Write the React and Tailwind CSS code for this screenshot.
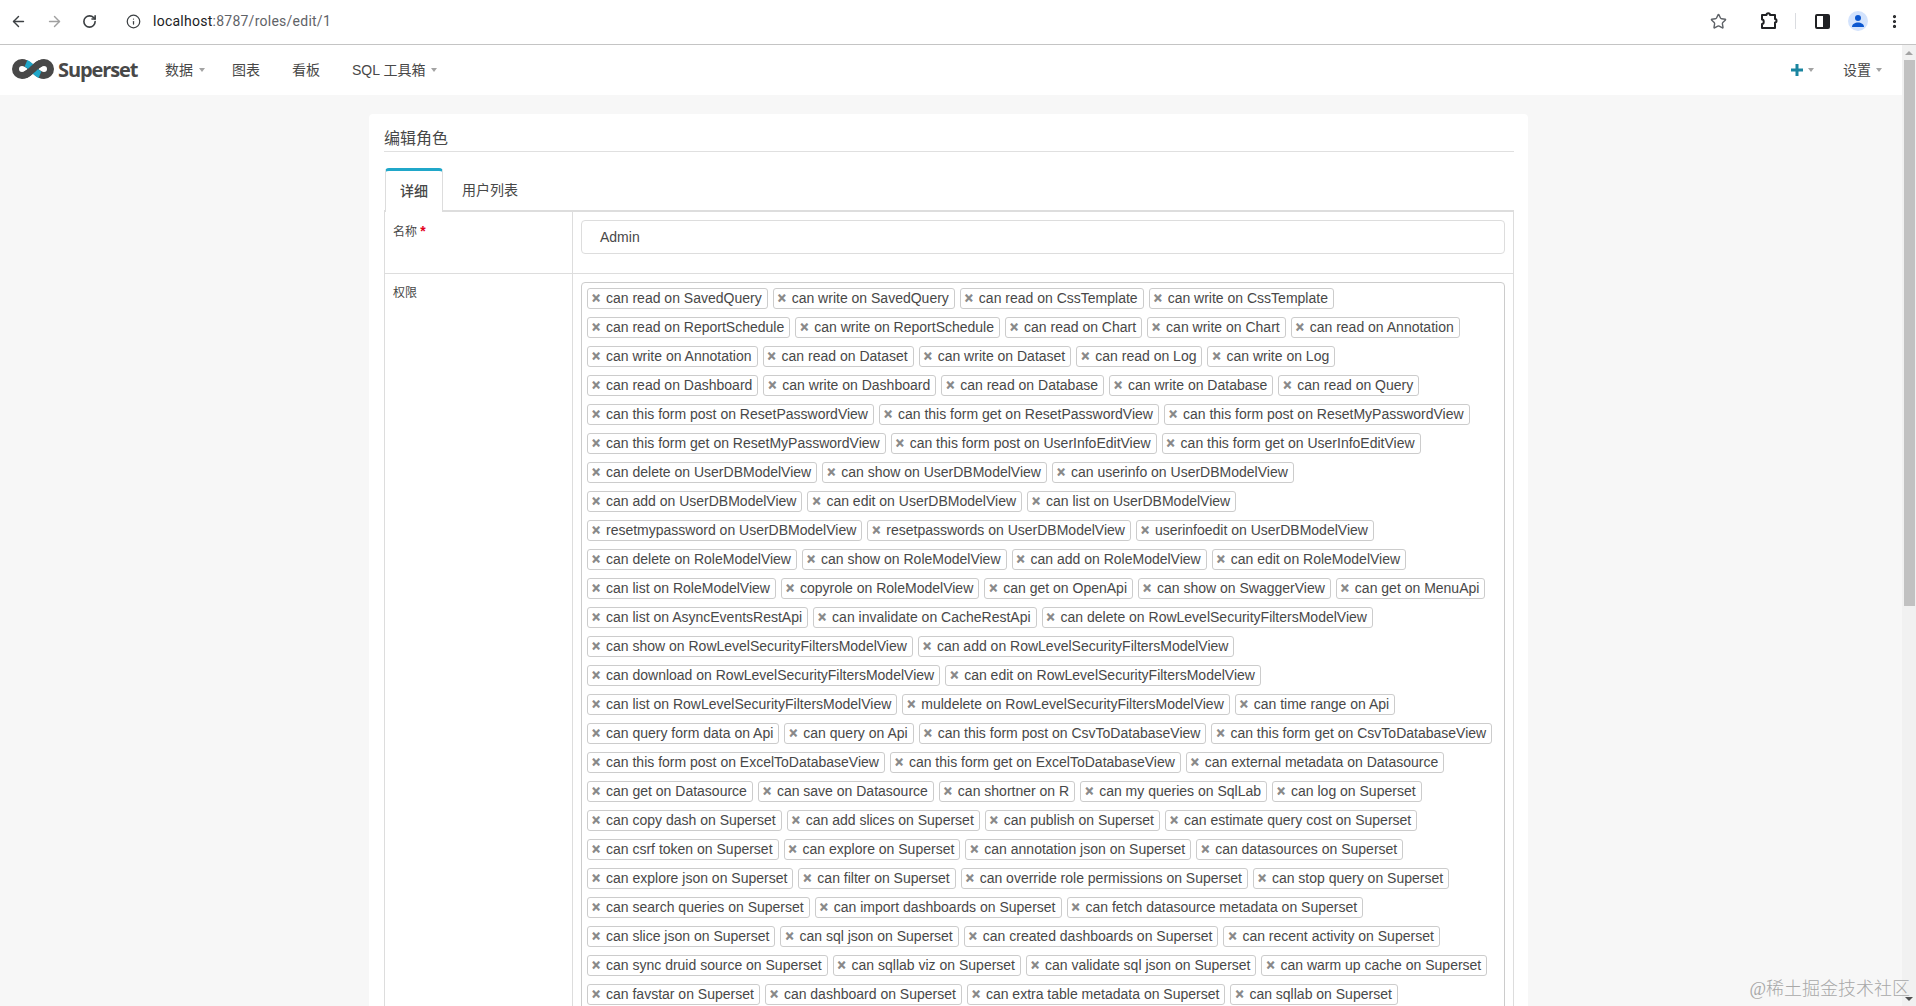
import React from 'react';
import { ArrowLeft, ArrowRight, RotateCw, Info, Star, EllipsisVertical } from 'lucide-react';

const permissions = [
  'can read on SavedQuery', 'can write on SavedQuery', 'can read on CssTemplate', 'can write on CssTemplate',
  'can read on ReportSchedule', 'can write on ReportSchedule', 'can read on Chart', 'can write on Chart', 'can read on Annotation',
  'can write on Annotation', 'can read on Dataset', 'can write on Dataset', 'can read on Log', 'can write on Log',
  'can read on Dashboard', 'can write on Dashboard', 'can read on Database', 'can write on Database', 'can read on Query',
  'can this form post on ResetPasswordView', 'can this form get on ResetPasswordView', 'can this form post on ResetMyPasswordView',
  'can this form get on ResetMyPasswordView', 'can this form post on UserInfoEditView', 'can this form get on UserInfoEditView',
  'can delete on UserDBModelView', 'can show on UserDBModelView', 'can userinfo on UserDBModelView',
  'can add on UserDBModelView', 'can edit on UserDBModelView', 'can list on UserDBModelView',
  'resetmypassword on UserDBModelView', 'resetpasswords on UserDBModelView', 'userinfoedit on UserDBModelView',
  'can delete on RoleModelView', 'can show on RoleModelView', 'can add on RoleModelView', 'can edit on RoleModelView',
  'can list on RoleModelView', 'copyrole on RoleModelView', 'can get on OpenApi', 'can show on SwaggerView', 'can get on MenuApi',
  'can list on AsyncEventsRestApi', 'can invalidate on CacheRestApi', 'can delete on RowLevelSecurityFiltersModelView',
  'can show on RowLevelSecurityFiltersModelView', 'can add on RowLevelSecurityFiltersModelView',
  'can download on RowLevelSecurityFiltersModelView', 'can edit on RowLevelSecurityFiltersModelView',
  'can list on RowLevelSecurityFiltersModelView', 'muldelete on RowLevelSecurityFiltersModelView', 'can time range on Api',
  'can query form data on Api', 'can query on Api', 'can this form post on CsvToDatabaseView', 'can this form get on CsvToDatabaseView',
  'can this form post on ExcelToDatabaseView', 'can this form get on ExcelToDatabaseView', 'can external metadata on Datasource',
  'can get on Datasource', 'can save on Datasource', 'can shortner on R', 'can my queries on SqlLab', 'can log on Superset',
  'can copy dash on Superset', 'can add slices on Superset', 'can publish on Superset', 'can estimate query cost on Superset',
  'can csrf token on Superset', 'can explore on Superset', 'can annotation json on Superset', 'can datasources on Superset',
  'can explore json on Superset', 'can filter on Superset', 'can override role permissions on Superset', 'can stop query on Superset',
  'can search queries on Superset', 'can import dashboards on Superset', 'can fetch datasource metadata on Superset',
  'can slice json on Superset', 'can sql json on Superset', 'can created dashboards on Superset', 'can recent activity on Superset',
  'can sync druid source on Superset', 'can sqllab viz on Superset', 'can validate sql json on Superset', 'can warm up cache on Superset',
  'can favstar on Superset', 'can dashboard on Superset', 'can extra table metadata on Superset', 'can sqllab on Superset',
];

const Caret = ({ className = 'ml-[6px]' }) => (
  <span className={`${className} inline-block w-0 h-0 border-x-[3px] border-x-transparent border-t-[4px] border-t-[#a3a3a3]`} />
);

const SupersetLogo = () => (
  <svg className="block" width="42" height="20" viewBox="0 0 42 20" fill="none" strokeWidth="7">
    <path d="M10 3.500a6.500 6.500 0 1 0 0 13c4.500 0 7-3 11-6.500s6.500-6.500 11-6.500a6.500 6.500 0 1 1 0 13c-4.500 0-7-3-11-6.500S14.500 3.500 10 3.500Z" stroke="#484848" />
    {/* teal on the falling strand, dark strand crosses over it */}
    <path d="M14 4.200C17 5.500 18.500 7.800 21 10c2.500 2.200 4 4.500 7 5.800" stroke="#20a7c9" />
    <path d="M13.500 15.800C16.500 14.500 18.500 12.200 21 10s4.500-4.500 7.500-5.800" stroke="#484848" />
  </svg>
);

const Tag = ({ label }) => (
  <span className="flex items-center h-[21px] pl-[4px] pr-[5px] border border-[#ccc] rounded-[3px] bg-white text-[14px] leading-[19px] text-[#484848] whitespace-nowrap">
    <span className="w-[13px] font-bold text-[#878787] [-webkit-text-stroke:0.5px_#878787]">×</span>
    <span className="ml-[1px]">{label}</span>
  </span>
);

const BrowserBar = () => (
  <div className="h-[45px] shrink-0 flex items-center pb-[2px] bg-white border-b border-[#c4c4c4] text-[#3c4043]">
    <ArrowLeft className="ml-[10px] w-[17px] h-[17px]" strokeWidth={2} />
    <ArrowRight className="ml-[19px] w-[17px] h-[17px] text-[#a0a0a0]" strokeWidth={2} />
    <RotateCw className="ml-[19px] w-[15px] h-[15px]" strokeWidth={2.6} />
    <Info className="ml-[29px] w-[15px] h-[15px]" strokeWidth={2} />
    <div className="ml-[12px] text-[14px] font-['Roboto',sans-serif] tracking-[0.25px]">
      <span className="text-[#202124]">localhost</span>
      <span className="text-[#5f6368]">:8787/roles/edit/1</span>
    </div>
    <Star className="ml-auto w-[17px] h-[17px] text-[#5f6368]" strokeWidth={2} />
    {/* extension puzzle */}
    <svg className="ml-[33px]" width="18" height="18" viewBox="0 0 18 18" fill="none" stroke="#202124" strokeWidth="2" strokeLinejoin="round">
      <path d="M2 3h4.500c0-2.300 3.500-2.300 3.500 0H15v4c2 0 2 3.500 0 3.500V16H2v-4c2.300 0 2.300-4.500 0-4.500Z" />
    </svg>
    <div className="ml-[17px] w-[1px] h-[16px] bg-[#dadce0]" />
    {/* side panel */}
    <div className="ml-[19px] w-[15px] h-[15px] flex border-2 border-[#202124] rounded-[2px]">
      <div className="w-1/2 bg-white" />
      <div className="w-1/2 bg-[#202124]" />
    </div>
    <div className="ml-[18px] w-[20px] h-[20px] rounded-full bg-[#d3e3fd] flex items-center justify-center">
      <svg width="14" height="14" viewBox="0 0 14 14" fill="#0b57d0">
        <circle cx="7" cy="4" r="3" />
        <path d="M1 13c0-3 3-4.500 6-4.500s6 1.500 6 4.500Z" />
      </svg>
    </div>
    <EllipsisVertical className="ml-[18px] mr-[13px] w-[17px] h-[17px] text-[#202124]" strokeWidth={2.5} />
  </div>
);

const NavBar = () => (
  <div className="h-[50px] shrink-0 flex items-center bg-white text-[14px] text-[#484848]">
    <div className="ml-[12px] mb-[2px]"><SupersetLogo /></div>
    <span className="ml-[4px] w-[80px] text-[20px] font-bold text-[#484848] font-['Open_Sans',sans-serif] tracking-[-1.1px]">Superset</span>
    <span className="ml-[27px]">数据</span>
    <Caret />
    <span className="ml-[27px]">图表</span>
    <span className="ml-[32px]">看板</span>
    <span className="ml-[32px]">SQL 工具箱</span>
    <Caret />
    <span className="ml-auto">
      <svg width="12" height="12" viewBox="0 0 12 12" fill="#1a85a0"><path d="M4.500 0h3v4.500H12v3H7.500V12h-3V7.500H0v-3h4.500Z" /></svg>
    </span>
    <Caret className="ml-[5px]" />
    <span className="ml-[29px]">设置</span>
    <Caret className="ml-[5px]" />
    <div className="w-[20px]" />
  </div>
);

const Scrollbar = () => (
  <div className="w-[14px] shrink-0 flex flex-col items-center bg-[#f1f1f1]">
    <div className="mt-[6px] w-0 h-0 border-x-[4px] border-x-transparent border-b-[4px] border-b-[#a3a3a3]" />
    <div className="mt-[5px] w-[11px] h-[546px] bg-[#c1c1c1]" />
    <div className="mt-auto mb-[5px] w-0 h-0 border-x-[4px] border-x-transparent border-t-[4px] border-t-[#505050]" />
  </div>
);

const RoleForm = () => (
  <div className="mt-[19px] ml-[369px] w-[1159px] pl-[15px] pr-[14px] pt-[15px] bg-white rounded-[4px]">
    <div className="h-[22px] border-b border-[#e0e0e0] text-[16px] leading-[20px] text-[#484848] box-content">编辑角色</div>
    <div className="mt-[16px] flex h-[44px] border-b-2 border-[#ddd] text-[14px] text-[#484848]">
      <div className="w-[58px] h-[44px] ml-[1px] border-x border-[#ddd] border-t-[3px] border-t-[#20a7c9] rounded-t-[4px] bg-white text-center leading-[40px] font-medium">详细</div>
      <div className="ml-[19px] leading-[44px]">用户列表</div>
    </div>
    <div className="border-x border-[#ddd] text-[12px] text-[#484848]">
      <div className="flex h-[62px] border-b border-[#ddd]">
        <div className="w-[188px] shrink-0 pl-[8px] pt-[11px] border-r border-[#ddd]">
          名称 <span className="text-[14px] leading-none text-[#e3001b] font-bold">*</span>
        </div>
        <div className="flex-1 pl-[8px] pr-[8px] pt-[8px]">
          <div className="h-[34px] border border-[#ddd] rounded-[4px] pl-[18px] text-[14px] leading-[32px]">Admin</div>
        </div>
      </div>
      <div className="flex">
        <div className="w-[188px] shrink-0 pl-[8px] pt-[10px] border-r border-[#ddd]">权限</div>
        <div className="flex-1 pl-[8px] pr-[8px] pt-[8px]">
          <div className="flex flex-wrap gap-x-[5px] gap-y-[8px] p-[5px] border border-[#ccc] rounded-[4px]">
            {permissions.map((p) => <Tag key={p} label={p} />)}
          </div>
        </div>
      </div>
    </div>
  </div>
);

const App = () => (
  <div className="relative h-screen overflow-hidden flex flex-col bg-white font-['Liberation_Sans','Noto_Sans_CJK_SC',sans-serif]">
    <BrowserBar />
    <div className="flex-1 min-h-0 flex">
      <div className="flex-1 min-w-0 overflow-hidden flex flex-col bg-[#f7f7f7]">
        <NavBar />
        <RoleForm />
      </div>
      <Scrollbar />
    </div>
    <div className="absolute right-[6px] bottom-[5px] text-[18px] leading-[24px] text-[#a8a8a8] font-['Liberation_Serif','Noto_Sans_CJK_SC',serif] font-light">@稀土掘金技术社区</div>
  </div>
);

export default App;
